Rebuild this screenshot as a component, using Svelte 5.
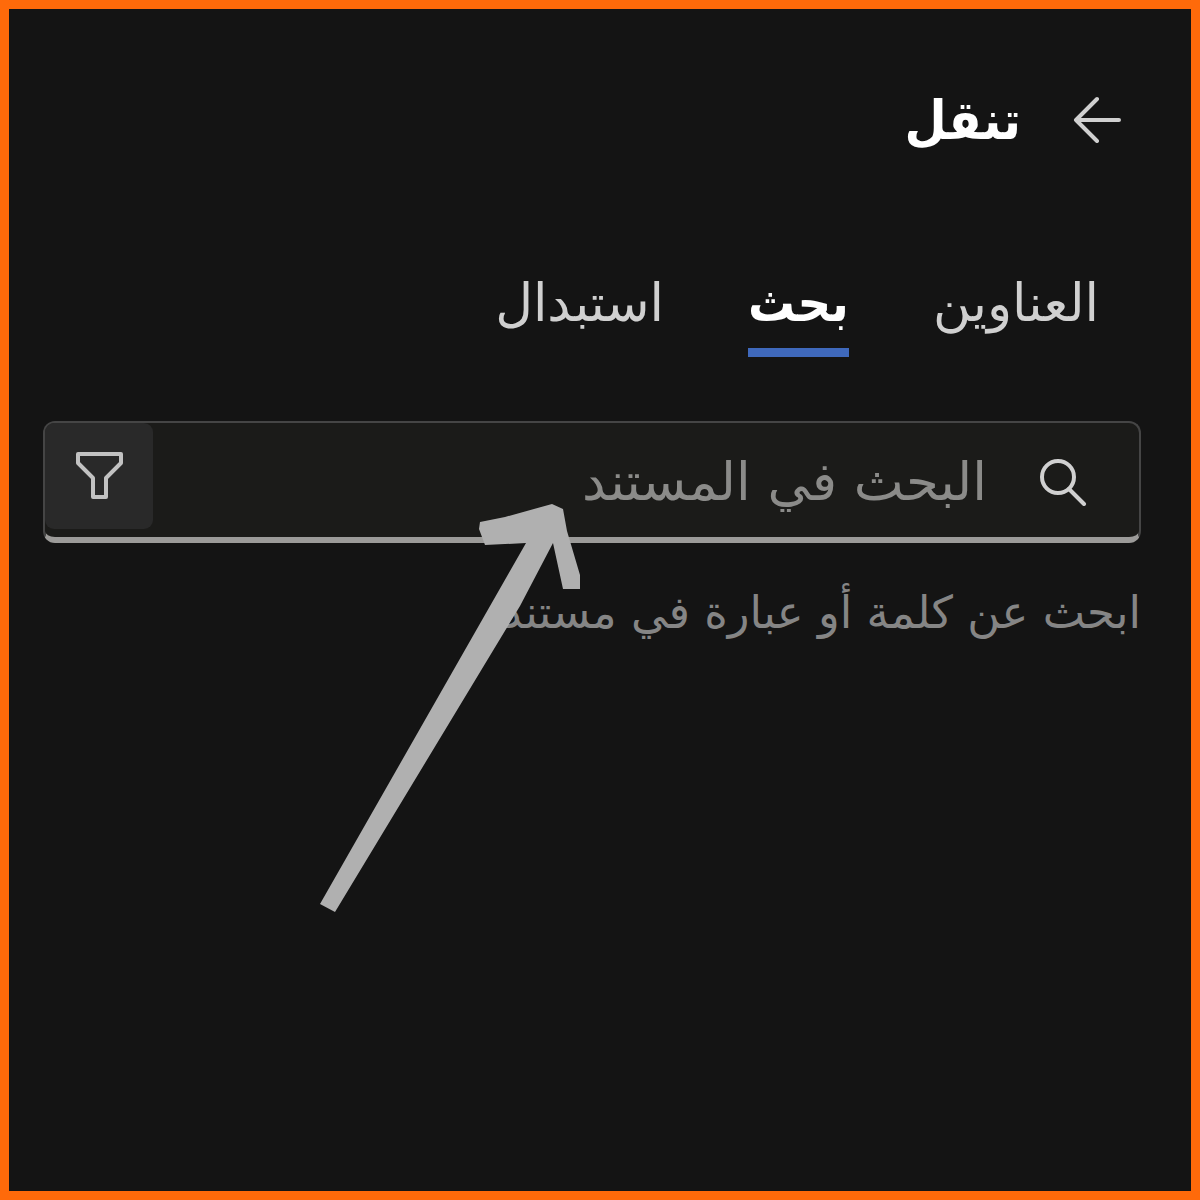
<script>
  let query = $state('');
  let active = $state('search');
  const tabs = [
    { id: 'headings', label: 'العناوين' },
    { id: 'search', label: 'بحث' },
    { id: 'replace', label: 'استبدال' }
  ];
</script>

<main class="pane" dir="rtl" lang="ar">
  <header>
    <button class="back" type="button" aria-label="رجوع">
      <svg viewBox="0 0 48 48" width="48" height="48"><path d="M46 25H3M24 4 3 25l21 21" /></svg>
    </button>
    <h1>تنقل</h1>
  </header>

  <nav>
    {#each tabs as tab}
      <button class="tab" class:active={active === tab.id} type="button" onclick={() => (active = tab.id)}>{tab.label}</button>
    {/each}
  </nav>

  <section>
    <div class="box">
      <svg class="glass" viewBox="0 0 48 52" width="48" height="52"><circle cx="19" cy="23" r="16" /><path d="m30 35 15 15" /></svg>
      <input type="text" aria-label="البحث في المستند" placeholder="البحث في المستند" bind:value={query} />
      <button class="filter" type="button" aria-label="تصفية">
        <svg viewBox="0 0 52 48" width="52" height="48"><path d="M5 2h43v9L33 26v19H20V26L5 11z" /></svg>
      </button>
    </div>
    <p>ابحث عن كلمة أو عبارة في مستند</p>
  </section>

  <svg class="pointer" viewBox="0 0 280 430" width="280" height="430" aria-hidden="true">
    <path d="M10 411 216 50 175 52 169 36 170 29 195 24 242 11 253 16 257 38 270 82V96H253L243 50 210 113 25 419z" />
  </svg>
</main>

<style>
  :global(body) {
    margin: 0;
    background: #141414;
  }
  .pane {
    position: relative;
    box-sizing: border-box;
    min-height: 100vh;
    padding: 70px 50px 40px 34px;
    border: 9px solid #ff6a0a;
    background: #141414;
    color: #d0d0d0;
    font-family: "DejaVu Sans", sans-serif;
  }
  button {
    padding: 0;
    border: 0;
    background: none;
    color: inherit;
    font: inherit;
    cursor: pointer;
  }
  svg {
    display: block;
    fill: none;
    stroke: #d0d0d0;
    stroke-width: 4;
    stroke-linecap: round;
    stroke-linejoin: round;
  }
  header {
    display: flex;
    align-items: center;
    gap: 52px;
    height: 80px;
    padding-right: 20px;
  }
  h1 {
    margin: 0;
    padding-top: 4px;
    color: #fff;
    font-family: "DejaVu Sans Condensed", "DejaVu Sans", sans-serif;
    font-size: 54px;
    line-height: 76px;
  }
  nav {
    display: flex;
    gap: 84px;
    margin-top: 108px;
    padding-right: 42px;
  }
  .tab {
    height: 90px;
    padding-bottom: 8px;
    border-bottom: 9px solid transparent;
    font-size: 52px;
    line-height: 73px;
  }
  .tab.active {
    border-color: #3f69bc;
    color: #fff;
    font-family: "DejaVu Sans Condensed", "DejaVu Sans", sans-serif;
    font-weight: 700;
  }
  section {
    margin-top: 64px;
  }
  .box {
    display: flex;
    align-items: center;
    box-sizing: border-box;
    height: 122px;
    padding-right: 52px;
    border: 2px solid #454545;
    border-bottom: 6px solid #9c9b99;
    border-radius: 12px;
    background: #1b1b19;
  }
  input {
    flex: 1;
    min-width: 0;
    height: 100px;
    padding: 2px 52px 0 0;
    border: 0;
    outline: 0;
    background: none;
    color: #d0d0d0;
    font: inherit;
    font-size: 53px;
  }
  input::placeholder {
    color: #8b8b89;
    opacity: 1;
  }
  .glass {
    flex: none;
  }
  .filter {
    display: grid;
    place-items: center;
    align-self: flex-start;
    width: 108px;
    height: 106px;
    border-radius: 9px;
    background: #292929;
  }
  .filter svg {
    stroke: #c2c2c2;
  }
  p {
    margin: 38px 0 0;
    color: #858585;
    font-size: 45px;
    line-height: 64px;
  }
  .pointer {
    position: absolute;
    top: 484px;
    left: 301px;
    fill: #b0b0b0;
    stroke: none;
  }
</style>
